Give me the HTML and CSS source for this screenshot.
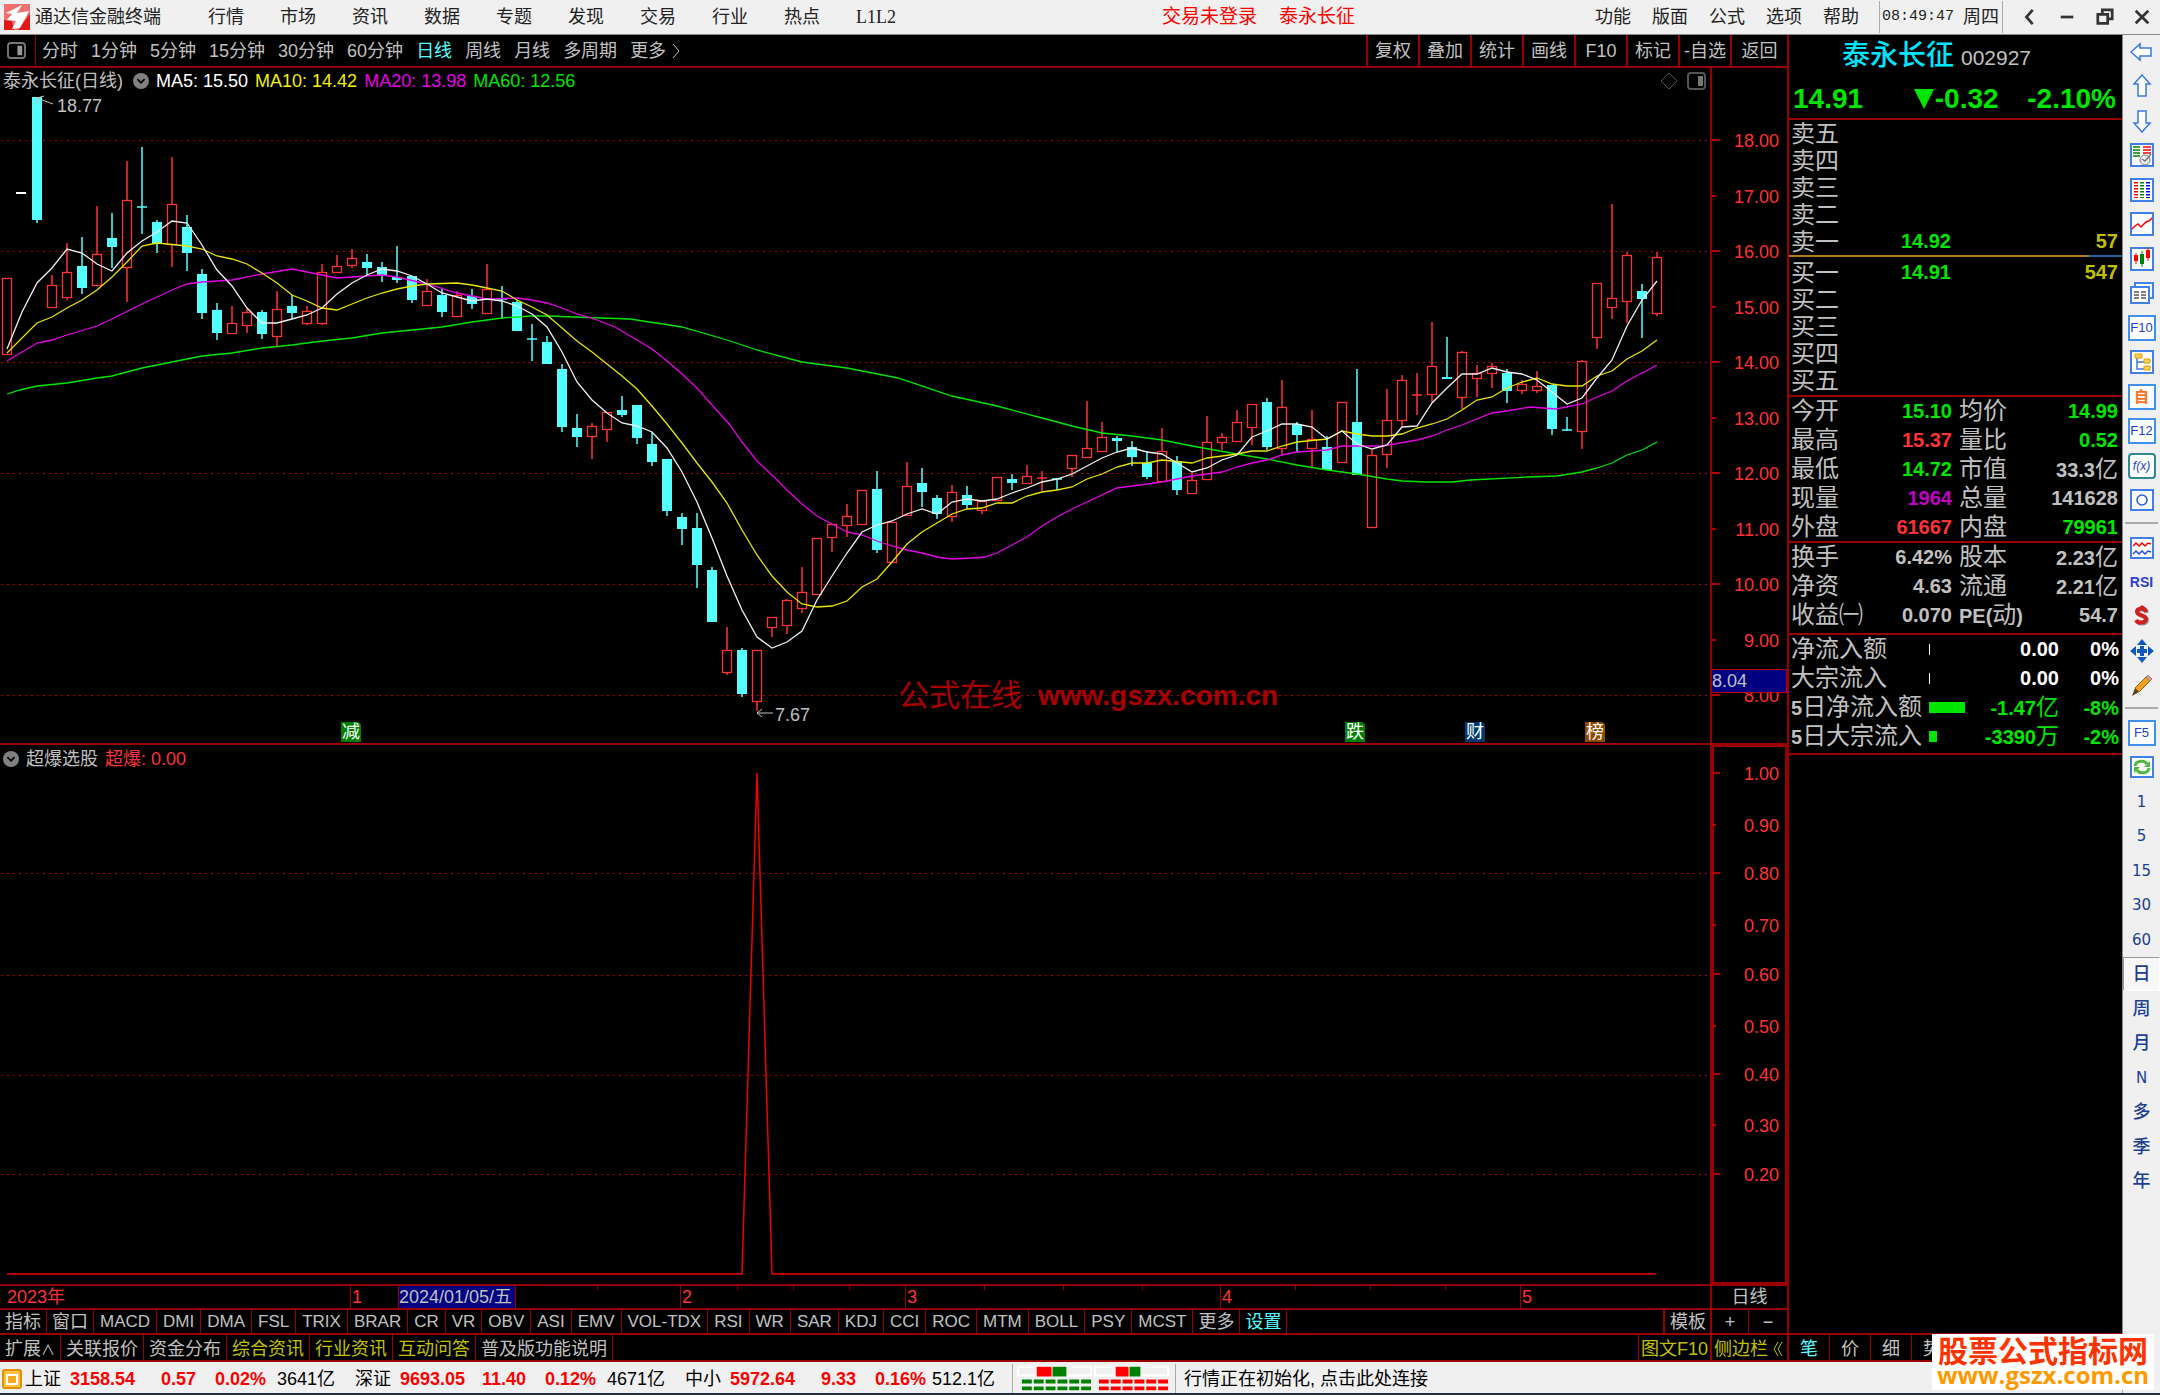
FILE: index.html
```html
<!DOCTYPE html>
<html lang="zh-CN">
<head>
    <meta charset="UTF-8">
    <meta name="viewport" content="width=device-width, initial-scale=1.0">
    <title>通达信金融终端</title>
    <link rel="stylesheet" href="styles.css">
</head>
<body>
<div class="terminal">
    <header class="menubar">
        <svg class="logo" viewBox="0 0 26 26"><rect width="26" height="26" fill="#f07070"/><path d="M0 16l8 1 2 9H0zM26 10v16H14z" fill="#e01818"/><path d="M2 9L18 1l-5 8 12-2-9 17-8 1 4-8-9-1 5-6z" fill="#fff"/></svg>
        <span class="app-name">通达信金融终端</span>
        <nav class="menu">
            <button>行情</button><button>市场</button><button>资讯</button><button>数据</button><button>专题</button><button>发现</button><button>交易</button><button>行业</button><button>热点</button><button class="serif">L1L2</button>
        </nav>
        <div class="login"><button>交易未登录</button><button>泰永长征</button></div>
        <nav class="menu menu-right">
            <button>功能</button><button>版面</button><button>公式</button><button>选项</button><button>帮助</button>
        </nav>
        <div class="clock"><span class="time">08:49:47</span><span>周四</span></div>
        <div class="window-btns">
            <button aria-label="后退"><svg viewBox="0 0 20 20"><path d="M13 2L6 10l7 8" fill="none" stroke="#333" stroke-width="3"/></svg></button>
            <button aria-label="最小化"><svg viewBox="0 0 20 20"><path d="M3 10h14" stroke="#333" stroke-width="3"/></svg></button>
            <button aria-label="还原"><svg viewBox="0 0 20 20"><path d="M7 6V2h11v10h-4M2 7h11v10H2z" fill="none" stroke="#333" stroke-width="3"/></svg></button>
            <button aria-label="关闭"><svg viewBox="0 0 20 20"><path d="M3 3l14 14M17 3L3 17" stroke="#333" stroke-width="3"/></svg></button>
        </div>
    </header>

    <main class="workspace">
        <div class="toolbar">
            <button class="pane-btn" aria-label="面板"><svg viewBox="0 0 20 18"><rect x="1" y="1" width="18" height="16" rx="3" fill="none" stroke="#777" stroke-width="2"/><rect x="11" y="4" width="5" height="10" fill="#999"/></svg></button>
            <nav class="periods">
                <button>分时</button><button>1分钟</button><button>5分钟</button><button>15分钟</button><button>30分钟</button><button>60分钟</button><button class="active">日线</button><button>周线</button><button>月线</button><button>多周期</button><button class="more">更多<svg viewBox="0 0 8 16"><path d="M1 1l6 7-6 7" fill="none" stroke="#c0c0c0" stroke-width="1"/></svg></button>
            </nav>
            <div class="tools">
                <button>复权</button><button>叠加</button><button>统计</button><button>画线</button><button>F10</button><button>标记</button><button>-自选</button><button class="back">返回</button>
            </div>
        </div>

        <section class="charts">
            <div class="pane price-pane">
                <svg id="price-chart" class="plot" viewBox="0 68 1710 675" preserveAspectRatio="none"></svg>
                <div class="legend">
                    <span>泰永长征(日线)</span>
                    <svg class="chev" viewBox="0 0 18 18"><circle cx="9" cy="9" r="9" fill="#808080"/><path d="M5 7l4 4 4-4" fill="none" stroke="#000" stroke-width="2"/></svg>
                    <span class="ma5">MA5: 15.50</span><span class="ma10">MA10: 14.42</span><span class="ma20">MA20: 13.98</span><span class="ma60">MA60: 12.56</span>
                    <svg class="corner" viewBox="0 0 46 18"><path d="M9 1l8 8-8 8-8-8z" fill="none" stroke="#555" stroke-width="1"/><rect x="28" y="1" width="17" height="16" rx="3" fill="none" stroke="#555" stroke-width="2"/><rect x="38" y="4" width="5" height="10" fill="#777"/></svg>
                </div>
                <div class="overlay" id="price-overlay"></div>
            </div>
            <div class="axis" id="price-axis">
                <svg class="plot" viewBox="1712 68 75 675" preserveAspectRatio="none"></svg>
                <span class="cursor-price">8.04</span>
            </div>
            <div class="pane sub-pane">
                <svg id="sub-chart" class="plot" viewBox="0 745 1710 539" preserveAspectRatio="none"></svg>
                <div class="legend">
                    <svg class="chev" viewBox="0 0 18 18"><circle cx="9" cy="9" r="9" fill="#808080"/><path d="M5 7l4 4 4-4" fill="none" stroke="#000" stroke-width="2"/></svg>
                    <span>超爆选股</span><span class="red">超爆: 0.00</span>
                </div>
            </div>
            <div class="axis sub-axis" id="sub-axis">
                <svg class="plot" viewBox="1712 745 75 539" preserveAspectRatio="none"></svg>
            </div>
            <div class="timeline" id="timeline"></div>
            <div class="timeline-type">日线</div>
        </section>

        <div class="tabs">
            <button>指标</button><button>窗口</button>
            <div class="indicators"><button>MACD</button><button>DMI</button><button>DMA</button><button>FSL</button><button>TRIX</button><button>BRAR</button><button>CR</button><button>VR</button><button>OBV</button><button>ASI</button><button>EMV</button><button>VOL-TDX</button><button>RSI</button><button>WR</button><button>SAR</button><button>KDJ</button><button>CCI</button><button>ROC</button><button>MTM</button><button>BOLL</button><button>PSY</button><button>MCST</button></div>
            <button>更多</button><button class="cyan">设置</button>
            <button class="tpl">模板</button><button class="zoom-in">+</button><button class="zoom-out">−</button>
        </div>
        <div class="tabs links">
            <button>扩展<small>∧</small></button><button>关联报价</button><button>资金分布</button><button class="yellow">综合资讯</button><button class="yellow">行业资讯</button><button class="yellow">互动问答</button><button>普及版功能说明</button>
            <button class="f10 yellow">图文F10</button><button class="side yellow">侧边栏<svg viewBox="0 0 10 16"><path d="M5 1L1 8l4 7M9 1L5 8l4 7" fill="none" stroke="#c0c000" stroke-width="1"/></svg></button>
        </div>
    </main>

    <aside class="quote">
        <div class="quote-head">
            <div class="name-row"><span class="name">泰永长征</span><span class="code">002927</span></div>
            <div class="price-row"><span>14.91</span><span class="chg"><svg viewBox="0 0 20 20"><path d="M0 0h20L10 20z" fill="#00e600"/></svg>-0.32</span><span>-2.10%</span></div>
        </div>
        <div class="book sell">
            <div><span>卖五</span></div><div><span>卖四</span></div><div><span>卖三</span></div><div><span>卖二</span></div>
            <div><span>卖一</span><b class="green">14.92</b><b class="yellow">57</b></div>
        </div>
        <div class="ratio"></div>
        <div class="book buy">
            <div><span>买一</span><b class="green">14.91</b><b class="yellow">547</b></div>
            <div><span>买二</span></div><div><span>买三</span></div><div><span>买四</span></div><div><span>买五</span></div>
        </div>
        <dl class="stats">
            <dt>今开</dt><dd class="green">15.10</dd><dt>均价</dt><dd class="green">14.99</dd>
            <dt>最高</dt><dd class="up">15.37</dd><dt>量比</dt><dd class="green">0.52</dd>
            <dt>最低</dt><dd class="green">14.72</dd><dt>市值</dt><dd>33.3<i>亿</i></dd>
            <dt>现量</dt><dd class="purple">1964</dd><dt>总量</dt><dd>141628</dd>
            <dt>外盘</dt><dd class="up">61667</dd><dt>内盘</dt><dd class="green">79961</dd>
        </dl>
        <dl class="stats finance">
            <dt>换手</dt><dd>6.42%</dd><dt>股本</dt><dd>2.23<i>亿</i></dd>
            <dt>净资</dt><dd>4.63</dd><dt>流通</dt><dd>2.21<i>亿</i></dd>
            <dt>收益㈠</dt><dd>0.070</dd><dt><b>PE(</b>动<b>)</b></dt><dd>54.7</dd>
        </dl>
        <div class="flows">
            <div><span class="flow-name">净流入额</span><span class="bar zero"></span><b>0.00</b><b>0%</b></div>
            <div><span class="flow-name">大宗流入</span><span class="bar zero"></span><b>0.00</b><b>0%</b></div>
            <div class="green"><span class="flow-name"><b>5</b>日净流入额</span><span class="bar" style="width: 36px"></span><b>-1.47<i>亿</i></b><b>-8%</b></div>
            <div class="green"><span class="flow-name"><b>5</b>日大宗流入</span><span class="bar" style="width: 8px"></span><b>-3390<i>万</i></b><b>-2%</b></div>
        </div>
        <nav class="quote-tabs"><button class="cyan">笔</button><button>价</button><button>细</button><button>势</button></nav>
        <a class="brand" href="#"><strong>股票公式指标网</strong><span>www.gszx.com.cn</span></a>
    </aside>

    <nav class="sidebar">
        <div class="tool-group">
            <button aria-label="返回"><svg viewBox="0 0 24 24"><path d="M1 12l9-8v4h11v8H10v4z" fill="#fff" stroke="#3a78e0" stroke-width="1.5"/></svg></button>
            <button aria-label="上"><svg viewBox="0 0 24 24"><path d="M12 1l8 9h-4v12H8V10H4z" fill="#fff" stroke="#3a78e0" stroke-width="1.5"/></svg></button>
            <button aria-label="下"><svg viewBox="0 0 24 24"><path d="M12 23l8-9h-4V2H8v12H4z" fill="#fff" stroke="#3a78e0" stroke-width="1.5"/></svg></button>
            <button aria-label="报价"><svg viewBox="0 0 24 24"><rect class="box" x="1" y="1" width="22" height="22"/><path d="M3 4h7M3 7h7M3 10h7M3 13h7" stroke="#008000" stroke-width="1.5"/><path d="M13 4h8M13 7h8M13 10h8" stroke="#f00" stroke-width="1.5"/><circle cx="15" cy="17" r="5" fill="#eee" stroke="#777"/><path d="M12 16l3 2 6-7" fill="none" stroke="#777" stroke-width="1.5"/></svg></button>
            <button aria-label="列表"><svg viewBox="0 0 24 24"><rect class="box" x="1" y="1" width="22" height="22"/><path d="M6 4v16" stroke="#f00" stroke-width="4" stroke-dasharray="1.5 1.5"/><path d="M12 4v16" stroke="#008000" stroke-width="4" stroke-dasharray="1.5 1.5"/><path d="M18 4v16" stroke="#00f" stroke-width="4" stroke-dasharray="1.5 1.5"/></svg></button>
            <button aria-label="分时图"><svg viewBox="0 0 24 24"><rect class="box" x="1" y="1" width="22" height="22"/><path d="M2 17l3-3 3-2 3 3 5-5 3-1 3-3" fill="none" stroke="#f00" stroke-width="1.5"/></svg></button>
            <button aria-label="K线图"><svg viewBox="0 0 24 24"><rect class="box" x="1" y="1" width="22" height="22"/><path d="M6 6v11M18 1v13" stroke="#f00"/><path d="M12 4v16" stroke="#008000"/><path d="M4 8h4v6H4zM16 3h4v8h-4z" fill="#f00"/><path d="M10 7h4v10h-4z" fill="#008000"/></svg></button>
            <button aria-label="多窗"><svg viewBox="0 0 24 24"><rect class="box" x="5" y="2" width="18" height="15"/><rect class="box" x="1" y="6" width="18" height="16"/><path d="M4 11h5M4 14h5M4 17h5M11 11h5M11 14h5M11 17h5" stroke="#555" stroke-width="1.5"/></svg></button>
            <button class="key">F10</button>
            <button aria-label="板块"><svg viewBox="0 0 24 24"><rect class="box" x="1" y="1" width="22" height="22"/><path d="M7 7v12h8M7 12h8" fill="none" stroke="#3a78e0" stroke-width="1.5"/><path d="M5 4h7v4H5zM14 9h6v4h-6zM14 16h6v4h-6z" fill="#ffd060" stroke="#e0a000"/></svg></button>
            <button class="key orange">自</button>
            <button class="key">F12</button>
            <button class="key formula">f(x)</button>
            <button aria-label="刷新"><svg viewBox="0 0 24 24"><rect class="box" x="1" y="2" width="22" height="20"/><circle cx="12" cy="12" r="5" fill="none" stroke="#2060d0" stroke-width="1.5"/></svg></button>
        </div>
        <hr>
        <div class="tool-group">
            <button aria-label="多图"><svg viewBox="0 0 24 24"><rect class="box" x="1" y="2" width="22" height="20"/><path d="M3 10l3-3 3 3 3-3 3 3 3-3 3 1" fill="none" stroke="#f00" stroke-width="1.5"/><path d="M3 18l3-3 3 3 3-3 3 3 3-3 3 1" fill="none" stroke="#24f" stroke-width="1.5"/></svg></button>
            <button class="rsi">RSI</button>
            <button aria-label="资金"><svg viewBox="0 0 24 24"><path d="M17 8c-1-5-10-4-9 0s9 3 9 7-8 5-10 1" fill="none" stroke="#999" stroke-width="4"/><path d="M16 7c-1-5-10-4-9 0s9 3 9 7-8 5-10 1" fill="none" stroke="#d02020" stroke-width="4"/><path d="M8 3l4-3 4 3z" fill="#d02020"/></svg></button>
            <button aria-label="移动"><svg viewBox="0 0 24 24"><path d="M12 0l5 6H7zM12 24l5-6H7zM0 12l6-5v10zM24 12l-6-5v10zM10 7h4v3h3v4h-3v3h-4v-3H7v-4h3z" fill="#1058c0"/></svg></button>
            <button aria-label="画笔"><svg viewBox="0 0 24 24"><path d="M2 22l3-8 4 4z" fill="#604020"/><path d="M5 14L16 3l4 4L9 18z" fill="#f0a020" stroke="#906010"/><path d="M16 3l2-2 4 4-2 2z" fill="#f09090" stroke="#888"/></svg></button>
        </div>
        <hr>
        <div class="tool-group">
            <button class="key">F5</button>
            <button aria-label="同步"><svg viewBox="0 0 24 24"><rect class="box" x="1" y="2" width="22" height="20"/><path d="M5 11c1-6 10-6 12-2M19 13c-1 6-10 6-12 2" fill="none" stroke="#50b840" stroke-width="3"/><path d="M20 6v6h-6zM4 18v-6h6z" fill="#50b840"/></svg></button>
            <button>1</button><button>5</button><button>15</button><button>30</button><button>60</button><button class="pressed">日</button><button class="zh">周</button><button class="zh">月</button><button>N</button><button class="zh">多</button><button class="zh">季</button><button class="zh">年</button>
        </div>
    </nav>

    <footer class="status">
        <svg class="status-icon" viewBox="0 0 20 20"><rect x="1" y="1" width="18" height="18" rx="2" fill="#ffc040" stroke="#e09000" stroke-width="2"/><rect x="5" y="6" width="10" height="9" fill="#f8a820" stroke="#fff" stroke-width="2"/></svg>
        <div class="index"><span>上证</span><b>3158.54</b><b>0.57</b><b>0.02%</b><span>3641亿</span></div>
        <div class="index"><span>深证</span><b>9693.05</b><b>11.40</b><b>0.12%</b><span>4671亿</span></div>
        <div class="index"><span>中小</span><b>5972.64</b><b>9.33</b><b>0.16%</b><span>512.1亿</span></div>
        <svg class="meters" viewBox="0 0 156 28">
            <path d="M1 2h74v9H1zM79 2h74v9H79z" fill="#f0f0f0" stroke="#fff" stroke-width="2"/>
            <path d="M20 2h15v10H20zM100 2h13v10h-13z" fill="#f00"/><path d="M36 2h14v10H36zM114 2h11v10h-11z" fill="#008000"/>
            <path d="M5 17h70M5 24h70" stroke="#008000" stroke-width="4" stroke-dasharray="10 2"/>
            <path d="M83 17h70M83 24h70" stroke="#f00" stroke-width="4" stroke-dasharray="10 2"/>
        </svg>
        <span class="message">行情正在初始化, 点击此处连接</span>
    </footer>
</div>
<script src="chart.js"></script>
</body>
</html>
```

FILE: styles.css
```css
* {
    box-sizing: border-box;
}
body {
    margin: 0;
    background: #000;
    color: #c0c0c0;
    font: 18px/24px "Liberation Sans", "Noto Sans CJK SC", sans-serif;
}
button {
    margin: 0;
    padding: 0;
    border: none;
    background: none;
    color: inherit;
    font: inherit;
    white-space: nowrap;
    cursor: pointer;
}
svg {
    display: block;
    flex: none;
}
.green { color: #00e600; }
.yellow { color: #c0c000; }
.cyan { color: #54ffff; }
.red, .up { color: #ff3232; }
.purple { color: #c000c0; }

.terminal {
    display: grid;
    grid-template-columns: minmax(0, 1fr) 336px 37px;
    grid-template-rows: 35px minmax(0, 1fr) 31px;
    height: 100vh;
    border-bottom: 2px solid #203040;
}

/* menu bar */
.menubar {
    grid-column: 1 / 4;
    display: flex;
    align-items: center;
    background: #f0f0f0;
    border-bottom: 1px solid #888;
    color: #222;
    padding-left: 4px;
}
.logo { width: 26px; height: 26px; }
.app-name { margin-left: 5px; }
.menu { display: flex; gap: 36px; margin-left: 47px; }
.serif { font-family: "Liberation Serif", serif; }
.login {
    display: flex;
    gap: 22px;
    margin: 0 240px 0 auto;
    color: #f00;
    font-size: 19px;
}
.menu-right { gap: 21px; margin-left: 0; }
.clock {
    display: flex;
    align-items: center;
    gap: 9px;
    height: 32px;
    margin-left: 20px;
    padding: 0 3px 0 2px;
    border-left: 1px solid #aaa;
    border-right: 1px solid #aaa;
}
.time { font: 15px/24px "Liberation Mono", monospace; }
.window-btns {
    display: flex;
    justify-content: space-between;
    width: 130px;
    margin: 0 9px 0 18px;
}
.window-btns svg { width: 18px; height: 18px; }

/* left workspace */
.workspace {
    display: flex;
    flex-direction: column;
    min-width: 0;
}
.toolbar {
    display: flex;
    height: 33px;
    border-bottom: 2px solid #980000;
}
.pane-btn {
    width: 36px;
    padding-left: 7px;
    border-right: 1px solid #980000;
}
.pane-btn svg { width: 19px; height: 17px; }
.periods { display: flex; gap: 13px; margin-left: 6px; }
.periods .active { color: #54ffff; }
.more { display: flex; align-items: center; gap: 6px; }
.more svg { width: 8px; height: 16px; }
.tools { display: flex; margin-left: auto; }
.tools button {
    width: 52px;
    border-left: 2px solid #980000;
}
.tools .back { width: 57px; }

.charts {
    flex: 1;
    display: grid;
    grid-template-columns: minmax(0, 1fr) 77px;
    grid-template-rows: minmax(0, 677fr) minmax(0, 541fr) 24px;
}
.pane, .axis {
    position: relative;
    border-bottom: 2px solid #980000;
}
.plot {
    position: absolute;
    inset: 0;
    width: 100%;
    height: 100%;
}
.axis {
    border-left: 2px solid #980000;
    color: #ff3232;
}
.sub-axis { box-shadow: inset 0 0 0 2px #980000; }
.tick-label {
    position: absolute;
    right: 8px;
    transform: translateY(-50%);
}
.cursor-price {
    position: absolute;
    top: 89%;
    left: 0;
    right: 0;
    border: 1px solid #c00000;
    border-left: none;
    background: #000080;
    color: #c0c0c0;
    line-height: 22px;
}
.legend {
    position: relative;
    display: flex;
    align-items: center;
    gap: 7px;
    height: 26px;
    padding-left: 3px;
}
.chev { width: 16px; height: 16px; }
.price-pane .chev { margin-left: 3px; }
.sub-pane .legend { padding-top: 2px; }
.ma5 { color: #fff; }
.ma10 { color: #f0f000; }
.ma20 { color: #e600e6; }
.ma60 { color: #00e600; }
.corner { width: 46px; height: 18px; margin: 0 4px 0 auto; }
.overlay { position: absolute; inset: 0; }
.mark {
    position: absolute;
    transform: translateY(-50%);
    white-space: pre;
}
.event {
    width: 20px;
    border-radius: 0 4px 0 0;
    color: #fff;
    font-size: 18px;
    line-height: 20px;
    text-align: center;
}
.ev-green { background: #008000; }
.ev-blue { background: #003870; }
.ev-brown { background: #904800; }
.watermark {
    display: flex;
    align-items: center;
    gap: 16px;
    color: #a80000;
    font-size: 31px;
}
.watermark b { font-size: 28px; }

.timeline {
    position: relative;
    border-bottom: 2px solid #980000;
    color: #ff3232;
    line-height: 22px;
}
.month {
    position: absolute;
    top: 0;
    height: 22px;
    padding-left: 1px;
    border-left: 1px solid #980000;
}
.month.first { border-left: none; }
.minor {
    position: absolute;
    top: 0;
    width: 1px;
    height: 4px;
    background: #980000;
}
.date {
    position: absolute;
    top: 0;
    width: 118px;
    border: 1px solid #980000;
    border-width: 0 1px;
    background: #000080;
    color: #c0c0c0;
}
.timeline-type {
    border-left: 2px solid #980000;
    border-bottom: 2px solid #980000;
    line-height: 22px;
    text-align: center;
}

.tabs {
    display: flex;
    height: 25px;
    border-bottom: 2px solid #980000;
    line-height: 22px;
}
.tabs button {
    padding: 1px 5px 0;
    border-right: 1px solid #980000;
}
.tabs small { font-size: 14px; }
.indicators { display: flex; font-size: 17px; }
.indicators button { padding: 1px 6px 0; }
.tabs .tpl {
    width: 47px;
    margin-left: auto;
    border-left: 2px solid #980000;
    border-right: none;
}
.tabs .zoom-in { width: 39px; border-left: 2px solid #980000; }
.tabs .zoom-out { width: 38px; border-right: none; }
.tabs.links { height: 27px; line-height: 24px; }
.tabs.links button { padding-top: 2px; }
.tabs .f10 {
    width: 72px;
    margin-left: auto;
    padding: 0;
    border-left: 1px solid #980000;
    border-right: none;
}
.tabs .side {
    display: flex;
    align-items: center;
    gap: 5px;
    width: 77px;
    padding: 0 2px;
    border-left: 2px solid #980000;
    border-right: none;
}
.side svg { width: 10px; height: 16px; }

/* quote panel */
.quote {
    position: relative;
    display: flex;
    flex-direction: column;
    border-left: 2px solid #980000;
    border-right: 1px solid #888;
}
.quote-head {
    height: 85px;
    border-bottom: 2px solid #980000;
    padding: 4px 6px 0 4px;
}
.name-row {
    display: flex;
    align-items: baseline;
    justify-content: center;
    gap: 7px;
    padding-right: 36px;
    line-height: 34px;
}
.name { color: #00e6ff; font-size: 28px; font-weight: 500; }
.code { font-size: 21px; }
.price-row {
    display: flex;
    justify-content: space-between;
    margin-top: 4px;
    color: #00e600;
    font-size: 28px;
    font-weight: bold;
    line-height: 40px;
}
.chg { display: flex; align-items: center; gap: 1px; margin-left: 22px; }
.chg svg { width: 20px; height: 20px; }
.quote b, .quote dd { font-size: 20px; font-weight: bold; }
.quote i { font-size: 23px; font-style: normal; font-weight: normal; }
.book { font-size: 24px; line-height: 27px; }
.book div {
    display: grid;
    grid-template-columns: 80px 80px 1fr;
    height: 27px;
    padding: 0 4px 0 2px;
}
.book b { text-align: right; }
.ratio {
    height: 2px;
    background: linear-gradient(90deg, #b07820 90%, #2060a0 90%);
}
.buy { padding: 2px 0 1px; }
.stats {
    display: grid;
    grid-template-columns: 80px 81px 84px 1fr;
    row-gap: 1px;
    margin: 0;
    padding: 0 4px 0 2px;
    border-top: 2px solid #980000;
    font-size: 24px;
    line-height: 28px;
}
.finance { padding-bottom: 4px; }
.stats dt { height: 28px; white-space: nowrap; }
.stats dd { margin: 0; height: 28px; text-align: right; }
.stats dt:nth-of-type(2n) { padding-left: 7px; }
.flows {
    display: grid;
    row-gap: 1px;
    padding: 0 3px 3px 2px;
    border-top: 2px solid #980000;
    border-bottom: 2px solid #980000;
    font-size: 24px;
    line-height: 28px;
}
.flows div {
    display: grid;
    grid-template-columns: 138px 36px 94px 1fr;
    align-items: center;
    height: 28px;
}
.flows b { color: #fff; text-align: right; }
.flows .green b { color: #00e600; }
.flows .flow-name, .flows .flow-name b { color: #c0c0c0; white-space: nowrap; }
.bar { height: 11px; background: #00e600; }
.bar.zero { width: 1px; background: #fff; }
.quote-tabs {
    display: flex;
    height: 29px;
    margin-top: auto;
    border-top: 2px solid #980000;
    border-bottom: 2px solid #980000;
}
.quote-tabs button { width: 41px; padding-top: 2px; border-right: 1px solid #980000; }
.brand {
    position: absolute;
    right: -32px;
    bottom: -28px;
    z-index: 2;
    width: 222px;
    height: 56px;
    background: #fff;
    color: #ff9900;
    text-align: center;
    text-decoration: none;
    font: bold 24px/24px "Open Sans", "Noto Sans", sans-serif;
}
.brand strong {
    display: block;
    color: #ff3300;
    font: bold 30px/31px "Noto Sans CJK SC", sans-serif;
}
.brand span { display: block; line-height: 20px; }

/* right icon strip */
.sidebar {
    grid-row: 2 / 4;
    grid-column: 3;
    background: #f0f0f0;
    color: #1c3f94;
}
.tool-group { display: flex; flex-direction: column; }
.tool-group button {
    display: flex;
    align-items: center;
    justify-content: center;
    height: 34px;
    font-family: "DejaVu Sans", "Noto Sans CJK SC", sans-serif;
    font-size: 15px;
}
.tool-group button:nth-child(2n) { margin-bottom: 1px; }
.tool-group .zh, .tool-group .pressed { font-size: 18px; font-weight: 500; }
.tool-group svg { width: 24px; height: 24px; }
.box { fill: #fff; stroke: #4080e8; stroke-width: 2; }
.sidebar hr {
    height: 2px;
    margin: 4px 2px 7px;
    border: none;
    background: #aaa;
}
.tool-group .key::before {
    content: "";
    position: absolute;
    z-index: 0;
    width: 24px;
    height: 22px;
    border: 2px solid #4090f0;
}
.tool-group .key {
    font-family: "Liberation Sans", "Noto Sans CJK SC", sans-serif;
    font-size: 13px;
    color: #2040d0;
    background: linear-gradient(#fff, #fff) center / 24px 22px no-repeat;
}
.tool-group .orange { color: #ff7020; font-weight: bold; font-size: 15px; }
.tool-group .formula { font-style: italic; font-size: 12px; }
.tool-group .formula::before { border-color: #308890; border-radius: 4px; }
.tool-group .rsi {
    color: #3040c8;
    font-family: "Liberation Sans", sans-serif;
    font-size: 14px;
    font-weight: bold;
}
.tool-group .pressed {
    border: 1px solid #fff;
    border-top-color: #999;
    border-left-color: #999;
    background: #f8f8f8;
}

/* status bar */
.status {
    grid-column: 1 / 3;
    grid-row: 3;
    display: flex;
    align-items: center;
    background: #f0f0f0;
    border-right: 1px solid #aaa;
    color: #000;
    padding: 2px 0 0 2px;
}
.status-icon { width: 20px; height: 20px; }
.index {
    display: grid;
    grid-template-columns: 38px 72px 61px 70px 69px;
    margin: 0 17px 0 3px;
    text-align: right;
}
.index span:first-child { text-align: left; }
.index b { color: #f00; }
.meters {
    width: 164px;
    height: 29px;
    padding: 0 4px;
    border: 1px solid #aaa;
    border-width: 0 1px;
}
.message { margin-left: 8px; }
```

FILE: chart.js
```js
// [direction, high, body top, body bottom, low], one entry per trading day
const candles = [
    ["r", 278, 278, 355, 355], ["d", 193, 193, 193, 193], ["c", 97, 97, 220, 223], ["r", 275, 285, 308, 308], ["r", 243, 272, 298, 300],
    ["c", 237, 266, 288, 294], ["r", 206, 254, 286, 286], ["c", 213, 238, 247, 268], ["r", 161, 200, 268, 302], ["c", 147, 207, 208, 234],
    ["c", 220, 222, 244, 253], ["r", 157, 204, 245, 267], ["c", 215, 227, 253, 271], ["c", 269, 274, 313, 319], ["c", 303, 310, 333, 340],
    ["r", 306, 323, 334, 334], ["r", 309, 312, 326, 333], ["c", 310, 312, 334, 339], ["r", 291, 309, 337, 347], ["c", 295, 306, 313, 319],
    ["r", 306, 311, 324, 325], ["r", 264, 272, 324, 325], ["r", 255, 266, 273, 273], ["r", 249, 258, 266, 268], ["c", 254, 262, 268, 275],
    ["c", 262, 267, 275, 282], ["c", 246, 277, 280, 283], ["c", 276, 276, 300, 303], ["r", 279, 291, 306, 306], ["c", 289, 295, 312, 317],
    ["r", 291, 295, 317, 317], ["c", 289, 296, 304, 309], ["r", 264, 289, 314, 314], ["c", 286, 299, 300, 319], ["c", 300, 302, 331, 331],
    ["c", 324, 339, 340, 361], ["c", 336, 342, 364, 364], ["c", 364, 369, 427, 432], ["c", 414, 428, 437, 447], ["r", 423, 426, 437, 459],
    ["r", 412, 412, 430, 442], ["c", 396, 410, 415, 417], ["c", 405, 405, 438, 444], ["c", 432, 444, 462, 466], ["c", 459, 459, 511, 516],
    ["c", 513, 517, 529, 545], ["c", 513, 528, 565, 588], ["c", 567, 570, 622, 622], ["r", 627, 650, 673, 675], ["c", 648, 650, 694, 697],
    ["r", 650, 650, 702, 711], ["r", 617, 617, 628, 637], ["r", 599, 600, 626, 634], ["r", 567, 592, 609, 613], ["r", 538, 538, 595, 595],
    ["r", 524, 524, 538, 552], ["r", 504, 516, 526, 537], ["r", 490, 490, 525, 525], ["c", 471, 489, 550, 553], ["r", 522, 522, 563, 563],
    ["r", 462, 486, 516, 516], ["c", 468, 483, 492, 507], ["c", 495, 498, 514, 519], ["r", 485, 492, 517, 522], ["c", 486, 495, 505, 509],
    ["r", 501, 501, 511, 514], ["r", 477, 477, 501, 501], ["c", 474, 479, 483, 490], ["r", 465, 476, 484, 484], ["r", 471, 478, 479, 491],
    ["c", 479, 479, 480, 490], ["r", 455, 455, 469, 477], ["r", 401, 448, 458, 458], ["r", 422, 437, 452, 452], ["c", 436, 438, 441, 452],
    ["c", 441, 447, 457, 466], ["c", 451, 463, 477, 479], ["r", 428, 451, 482, 482], ["c", 456, 461, 490, 495], ["r", 473, 480, 494, 494],
    ["r", 416, 442, 480, 480], ["r", 433, 437, 443, 450], ["r", 410, 422, 442, 442], ["r", 404, 404, 428, 445], ["c", 398, 402, 447, 450],
    ["r", 380, 407, 449, 455], ["c", 422, 424, 435, 452], ["r", 410, 439, 449, 467], ["c", 436, 447, 470, 470], ["r", 402, 402, 463, 463],
    ["c", 369, 422, 475, 475], ["r", 450, 455, 528, 528], ["r", 389, 420, 455, 468], ["r", 375, 380, 421, 426], ["r", 373, 395, 396, 415],
    ["r", 322, 366, 395, 402], ["c", 337, 377, 379, 379], ["r", 351, 352, 398, 409], ["r", 365, 373, 379, 397], ["r", 363, 366, 374, 388],
    ["c", 369, 373, 391, 403], ["r", 380, 384, 391, 394], ["r", 371, 386, 391, 393], ["c", 385, 385, 429, 435], ["c", 417, 430, 431, 431],
    ["r", 360, 361, 432, 449], ["r", 283, 283, 338, 349], ["r", 204, 298, 308, 319], ["r", 252, 255, 302, 323], ["c", 284, 291, 299, 338],
    ["r", 252, 257, 314, 316]
];

const averages = [
    { color: "#00e600", points: "7,394 20,390 37,386 67,383 97,378 112,376 142,368 172,362 202,356 232,353 262,348 292,345 322,341 352,338 382,333 412,330 442,327 472,322 502,318 532,316 547,316 630,319 682,327 727,340 757,350 802,362 847,368 898,378 952,396 997,406 1042,418 1072,426 1102,433 1132,436 1162,440 1192,446 1237,454 1267,459 1297,465 1327,470 1357,474 1387,479 1402,481 1426,482 1452,482 1470,480 1528,477 1557,476 1582,472 1597,468 1612,463 1627,455 1642,450 1657,442" },
    { color: "#e600e6", points: "7,361 37,343 52,340 67,335 97,326 112,319 142,304 172,290 187,284 202,282 232,280 262,274 292,269 322,275 337,278 352,277 382,275 397,277 427,284 457,293 487,299 517,298 532,300 547,303 562,308 577,314 592,318 615,327 637,340 652,349 667,361 682,374 697,388 712,405 730,425 742,442 757,461 772,475 787,490 802,504 817,516 832,524 847,532 862,535 877,541 892,546 907,550 922,553 937,557 952,559 972,558 984,557 997,553 1012,545 1027,537 1042,526 1057,517 1072,509 1087,502 1117,488 1132,486 1162,482 1192,476 1222,472 1237,467 1252,463 1267,460 1282,455 1297,452 1327,450 1342,446 1383,446 1417,440 1432,436 1447,430 1462,425 1492,413 1507,411 1530,407 1556,409 1582,404 1597,397 1612,391 1627,381 1642,373 1657,365" },
    { color: "#e6e600", points: "7,353 37,323 52,317 67,308 82,300 97,290 112,277 127,262 142,246 157,243 187,246 202,249 217,256 232,259 247,264 262,273 277,283 292,295 307,301 322,308 337,310 352,304 367,298 382,293 397,289 412,286 427,284 457,283 472,285 487,288 502,291 517,300 532,307 547,315 562,328 577,341 592,352 607,364 622,376 637,389 652,406 667,424 682,443 697,463 712,482 727,503 742,530 757,555 772,576 787,592 802,604 817,607 832,606 847,601 862,587 877,579 892,562 907,544 922,532 937,523 952,514 967,509 982,508 997,503 1012,503 1027,496 1042,492 1057,490 1072,487 1087,479 1102,474 1117,467 1132,463 1147,463 1162,460 1192,463 1207,458 1237,454 1252,451 1267,451 1282,446 1297,442 1327,439 1342,431 1357,434 1372,436 1387,436 1402,434 1417,428 1432,424 1447,419 1462,410 1477,400 1492,397 1507,388 1522,382 1537,378 1552,384 1567,386 1582,386 1597,376 1612,371 1627,359 1642,351 1657,340" },
    { color: "#f0f0f0", points: "7,349 22,312 37,283 52,268 67,249 82,253 97,264 112,271 127,253 142,241 157,232 172,221 187,223 202,245 217,270 232,286 247,308 262,323 277,323 292,319 307,315 322,308 337,294 352,283 367,275 382,269 397,271 412,276 427,284 442,293 457,297 472,301 487,299 502,301 517,306 532,314 547,327 562,352 577,382 592,400 607,413 622,423 637,426 652,432 667,448 682,472 697,502 712,538 727,576 742,610 757,637 772,648 787,642 802,631 817,600 832,576 847,553 862,532 877,525 892,521 907,514 922,509 937,514 952,502 967,499 982,501 997,499 1012,493 1027,488 1042,482 1057,479 1072,474 1087,466 1102,458 1117,452 1132,448 1147,452 1162,454 1177,463 1192,472 1207,468 1222,460 1237,455 1252,437 1267,431 1282,424 1297,424 1312,427 1327,439 1342,431 1357,444 1372,449 1387,445 1402,427 1417,426 1432,403 1447,388 1462,374 1477,374 1492,368 1507,372 1522,374 1537,380 1552,392 1567,404 1582,398 1597,378 1612,360 1627,326 1642,300 1657,281" }
];

const PRICE = { top: 68, height: 675 };
const SUB = { top: 745, height: 539 };
const WIDTH = 1710;

function gridLine(y) {
    return `<path d="M1 ${y + 0.5}H1709" stroke="#b00000" stroke-dasharray="2 4"/>`;
}

function drawCandle([dir, high, top, bottom, low], i) {
    const x = 7 + i * 15;
    if (dir === "d") return `<path d="M${x - 6} ${high}h10" stroke="#fff" stroke-width="2"/>`;
    const color = dir === "r" ? "#ff3232" : "#54ffff";
    if (bottom - top < 2) {
        return `<path d="M${x - 5} ${top}h10M${x} ${high}V${low}" fill="none" stroke="${color}" stroke-width="1.5"/>`;
    }
    const wick = `<path d="M${x} ${high}V${top}M${x} ${bottom}V${low}" stroke="${color}" stroke-width="1.5"/>`;
    if (dir === "c") return wick + `<rect x="${x - 5}" y="${top}" width="10" height="${bottom - top}" fill="${color}"/>`;
    return wick + `<rect x="${x - 4.5}" y="${top + 0.5}" width="9" height="${bottom - top - 1}" fill="none" stroke="${color}" stroke-width="1.3"/>`;
}

function drawPrice() {
    let out = [140, 251, 362, 473, 584, 695].map(gridLine).join("");
    out += candles.map(drawCandle).join("");
    out += averages.map(a => `<polyline points="${a.points}" fill="none" stroke="${a.color}" stroke-width="1.3"/>`).join("");
    out += `<path d="M37 98l16 6M37 98v7M37 98l7-2M757 713h16M757 713l5-4M757 713l5 4" fill="none" stroke="#c0c0c0"/>`;
    document.getElementById("price-chart").innerHTML = out;
}

function drawSub() {
    let out = [873, 975, 1075, 1174].map(gridLine).join("");
    out += `<polyline points="7,1274 742,1274 757,773 772,1274 1656,1274" fill="none" stroke="#f00000" stroke-width="1.5"/>`;
    document.getElementById("sub-chart").innerHTML = out;
}

function drawAxis(id, box, ticks) {
    const axis = document.getElementById(id);
    let lines = "";
    ticks.forEach(([label, y], i) => {
        lines += `<path d="M1712 ${y}h${i % 2 ? 4 : 8}" stroke="#b00000" stroke-width="2"/>`;
        axis.insertAdjacentHTML("afterbegin", `<span class="tick-label" style="top: ${(y + 1 - box.top) / box.height * 100}%">${label}</span>`);
    });
    axis.querySelector("svg").innerHTML = lines;
}

function addMark(cls, x, y, html) {
    document.getElementById("price-overlay").insertAdjacentHTML("beforeend",
        `<span class="mark ${cls}" style="left: ${x / WIDTH * 100}%; top: ${(y - PRICE.top) / PRICE.height * 100}%">${html}</span>`);
}

function drawTimeline() {
    const months = [[6, "2023年"], [350, "1"], [680, "2"], [905, "3"], [1220, "4"], [1520, "5"]];
    const minors = [597, 737, 793, 849, 984, 1063, 1142, 1295, 1370, 1445];
    let out = months.map(([x, t], i) => `<span class="month ${i ? "" : "first"}" style="left: ${x / WIDTH * 100}%">${t}</span>`).join("");
    out += minors.map(x => `<span class="minor" style="left: ${x / WIDTH * 100}%"></span>`).join("");
    out += `<span class="date" style="left: ${398 / WIDTH * 100}%">2024/01/05/五</span>`;
    document.getElementById("timeline").innerHTML = out;
}

drawPrice();
drawSub();
drawAxis("price-axis", PRICE, [["18.00", 140], ["17.00", 196], ["16.00", 251], ["15.00", 307], ["14.00", 362], ["13.00", 418], ["12.00", 473], ["11.00", 529], ["10.00", 584], ["9.00", 640], ["8.00", 695]]);
drawAxis("sub-axis", SUB, [["1.00", 773], ["0.90", 825], ["0.80", 873], ["0.70", 925], ["0.60", 974], ["0.50", 1026], ["0.40", 1074], ["0.30", 1125], ["0.20", 1174]]);
drawTimeline();
addMark("", 57, 106, "18.77");
addMark("", 775, 715, "7.67");
addMark("watermark", 898, 696, "公式在线<b>www.gszx.com.cn</b>");
addMark("event ev-green", 341, 732, "减");
addMark("event ev-green", 1345, 732, "跌");
addMark("event ev-blue", 1465, 732, "财");
addMark("event ev-brown", 1585, 732, "榜");
```
